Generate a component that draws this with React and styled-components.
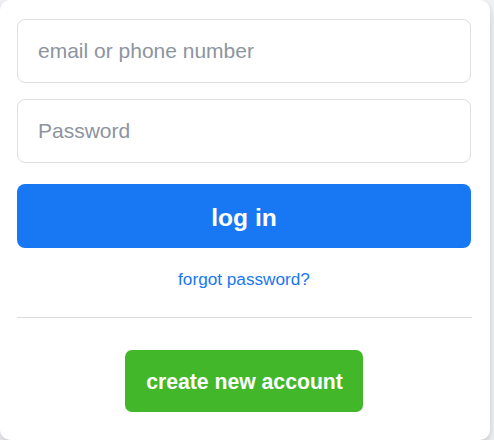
import React from "react";
import styled, { createGlobalStyle } from "styled-components";

const Global = createGlobalStyle`
  html, body { margin: 0; padding: 0; background: #f0f2f5; }
  body { font-family: "Liberation Sans", Arial, Helvetica, sans-serif; }
  * { box-sizing: border-box; }
`;

const Card = styled.div`
  width: 490px;
  height: 440px;
  background: #ffffff;
  border-radius: 10px;
  box-shadow: 0 2px 4px rgba(0, 0, 0, 0.1), 0 8px 16px rgba(0, 0, 0, 0.1);
  padding: 19px 19px 0 17px;
`;

const Form = styled.form`
  display: flex;
  flex-direction: column;
  align-items: stretch;
`;

const Input = styled.input`
  height: 64px;
  width: 100%;
  border: 1px solid #dddfe2;
  border-radius: 8px;
  padding: 0 20px;
  font-family: "Liberation Sans", Arial, sans-serif;
  font-size: 21px;
  color: #1d2129;
  margin-bottom: ${(p) => p.$gap}px;
  outline: none;
  &::placeholder { color: #8d949e; }
`;

const PrimaryButton = styled.button`
  height: 64px;
  width: 100%;
  border: none;
  border-radius: 8px;
  background: #1877f2;
  color: #ffffff;
  font-family: "Liberation Sans", Arial, sans-serif;
  font-weight: bold;
  font-size: 24.6px;
  padding: 4px 0 0;
  cursor: pointer;
`;

const ForgotLink = styled.a`
  display: block;
  margin-top: 21px;
  line-height: 20px;
  text-align: center;
  font-size: 17.2px;
  color: #1877f2;
  text-decoration: none;
`;

const Divider = styled.div`
  height: 1px;
  background: #dadde1;
  margin-top: 28px;
  margin-right: -1px;
`;

const CreateRow = styled.div`
  display: flex;
  justify-content: center;
  margin-top: 32px;
`;

const CreateButton = styled.button`
  height: 62px;
  padding: 1px 20px 0 21px;
  border: none;
  border-radius: 7px;
  background: #42b72a;
  color: #ffffff;
  font-family: "Liberation Sans", Arial, sans-serif;
  font-weight: bold;
  font-size: 21.2px;
  cursor: pointer;
`;

export default function App() {
  return (
    <>
      <Global />
      <Card>
        <Form onSubmit={(e) => e.preventDefault()}>
          <Input type="text" placeholder="email or phone number" $gap={16} />
          <Input type="password" placeholder="Password" $gap={21} />
          <PrimaryButton type="submit">log in</PrimaryButton>
          <ForgotLink href="#">forgot password?</ForgotLink>
          <Divider />
          <CreateRow>
            <CreateButton type="button">create new account</CreateButton>
          </CreateRow>
        </Form>
      </Card>
    </>
  );
}
